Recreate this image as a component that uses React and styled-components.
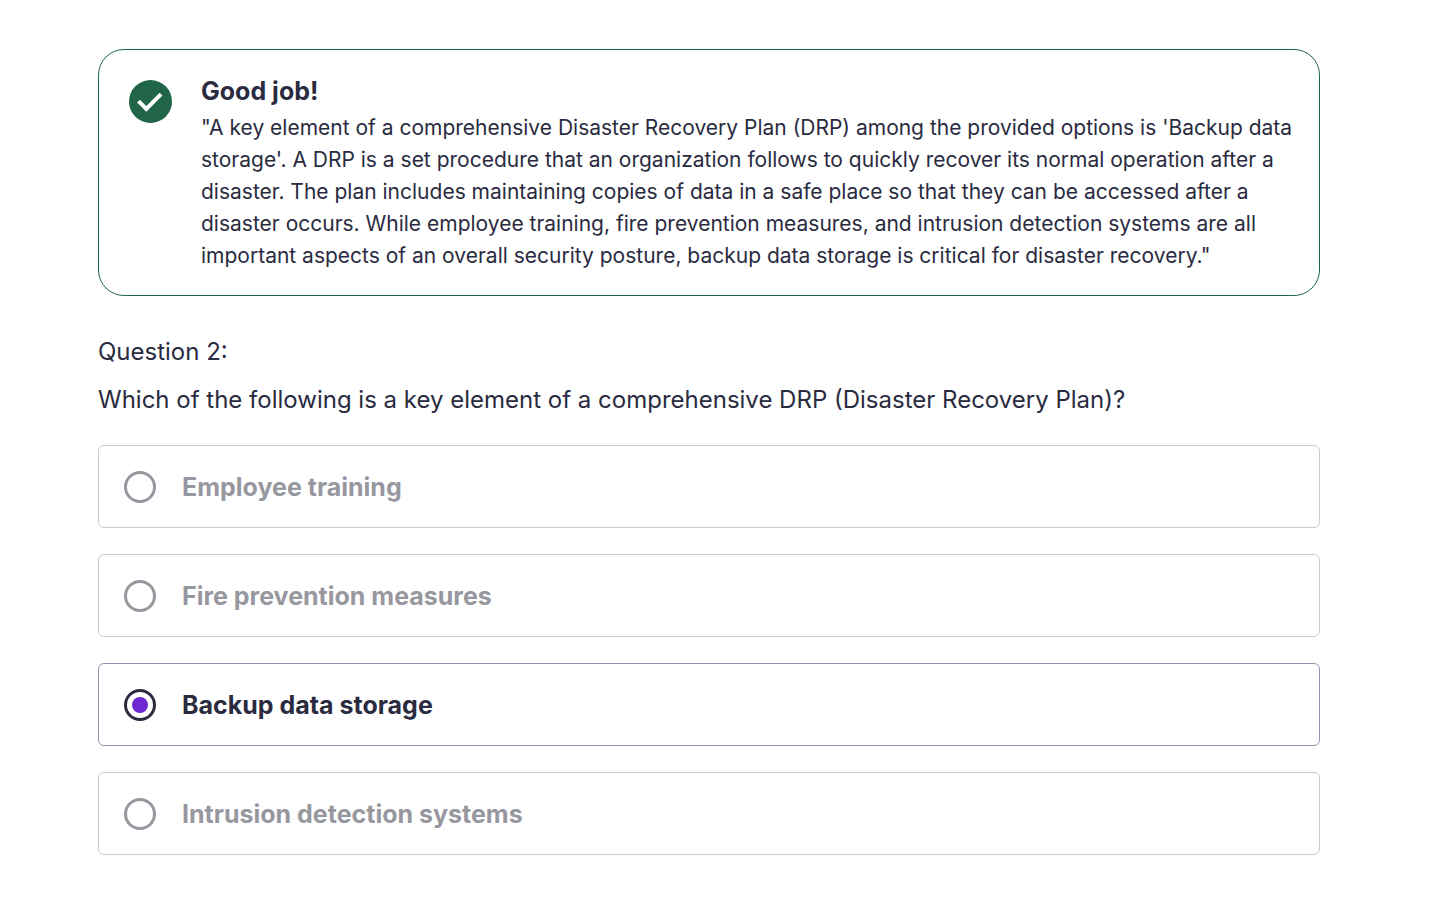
import React from "react";
import styled, { createGlobalStyle } from "styled-components";

const GlobalStyle = createGlobalStyle`
  *, *::before, *::after { box-sizing: border-box; }
  body {
    margin: 0;
    background: #fff;
    color: #2a2b3f;
    font-family: Inter, "Liberation Sans", Arial, sans-serif;
  }
`;

const Page = styled.main`
  padding: 49px 130px 63px 98px;
`;

const Feedback = styled.section`
  display: flex;
  align-items: flex-start;
  gap: 29px;
  padding: 25px 24px 23px 30px;
  border: 1px solid #206547;
  border-radius: 26px;
`;

const CheckIcon = styled.svg`
  flex: none;
  width: 43px;
  height: 43px;
  margin-top: 5px;
`;

const FeedbackTitle = styled.h2`
  margin: 0;
  font-size: 25px;
  font-weight: 700;
  line-height: 32px;
`;

const FeedbackText = styled.p`
  margin: 5px 0 0;
  font-size: 21px;
  line-height: 32px;
`;

const Question = styled.fieldset`
  min-width: 0;
  margin: 40px 0 0;
  padding: 0;
  border: 0;
`;

const Legend = styled.legend`
  padding: 0;
  font-size: 24px;
  line-height: 32px;
`;

const Prompt = styled.p`
  margin: 16px 0 0;
  font-size: 24px;
  line-height: 32px;
`;

const Options = styled.div`
  display: grid;
  gap: 26px;
  margin-top: 29px;
`;

const Option = styled.label`
  display: flex;
  align-items: center;
  gap: 26px;
  padding: 25px 25px 24px;
  border: 1px solid ${(p) => (p.$selected ? "#9194ac" : "#c9cad6")};
  border-radius: 6px;
  color: ${(p) => (p.$selected ? "#2a2b3f" : "#9797a0")};
  font-size: 25px;
  font-weight: 700;
  line-height: 32px;
`;

const Radio = styled.input`
  appearance: none;
  display: grid;
  place-items: center;
  flex: none;
  width: 32px;
  height: 32px;
  margin: 0;
  border: 3px solid #9797a0;
  border-radius: 50%;
  &:checked { border-color: #2a2b3f; }
  &:checked::before {
    content: "";
    width: 16px;
    height: 16px;
    border-radius: 50%;
    background: #6d28d2;
  }
`;

const options = [
  "Employee training",
  "Fire prevention measures",
  "Backup data storage",
  "Intrusion detection systems",
];

export default function App() {
  const [answer, setAnswer] = React.useState("Backup data storage");
  return (
    <Page>
      <GlobalStyle />
      <Feedback>
        <CheckIcon viewBox="0 0 43 43" aria-hidden="true">
          <circle cx="21.5" cy="21.5" r="21.5" fill="#206547" />
          <path d="M9.5 21.2l7.8 7.8L32 14.2" fill="none" stroke="#fff" strokeWidth="4" />
        </CheckIcon>
        <div>
          <FeedbackTitle>Good job!</FeedbackTitle>
          <FeedbackText>
            "A key element of a comprehensive Disaster Recovery Plan (DRP) among the provided options is
            'Backup data storage'. A DRP is a set procedure that an organization follows to quickly
            recover its normal operation after a disaster. The plan includes maintaining copies of data
            in a safe place so that they can be accessed after a disaster occurs. While employee
            training, fire prevention measures, and intrusion detection systems are all important
            aspects of an overall security posture, backup data storage is critical for disaster
            recovery."
          </FeedbackText>
        </div>
      </Feedback>
      <Question>
        <Legend>Question 2:</Legend>
        <Prompt>Which of the following is a key element of a comprehensive DRP (Disaster Recovery Plan)?</Prompt>
        <Options>
          {options.map((o) => (
            <Option key={o} $selected={answer === o}>
              <Radio type="radio" name="answer" checked={answer === o} onChange={() => setAnswer(o)} />
              {o}
            </Option>
          ))}
        </Options>
      </Question>
    </Page>
  );
}
